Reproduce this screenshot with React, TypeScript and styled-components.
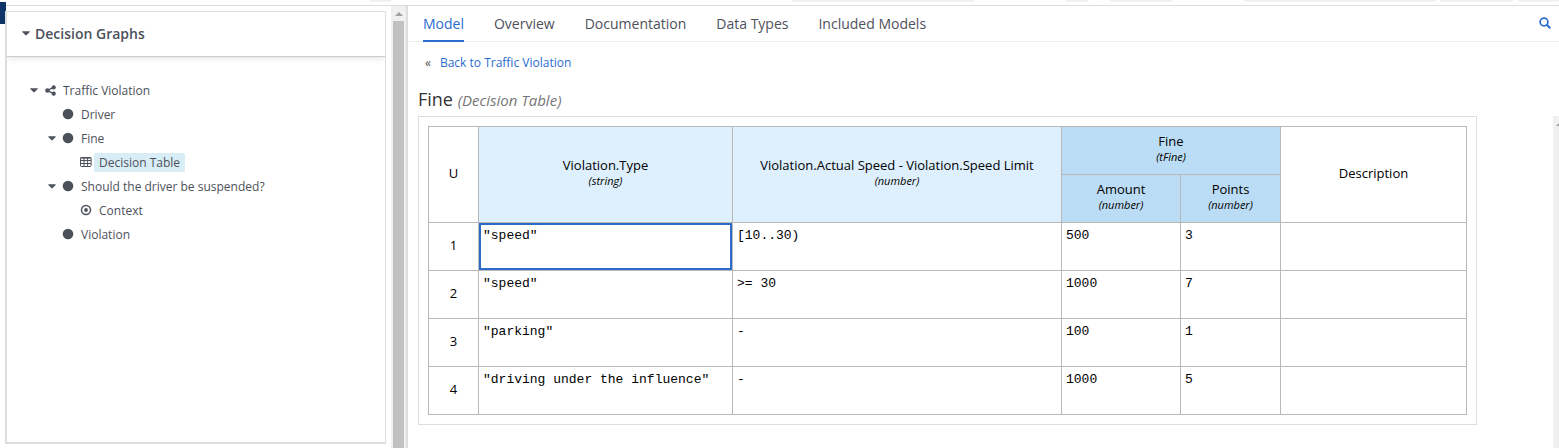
import React, { useState } from "react";
import styled, { createGlobalStyle } from "styled-components";

const Global = createGlobalStyle`
  * { box-sizing: border-box; }
  body { margin: 0; background: #fff; font-family: "Open Sans", "Noto Sans", sans-serif; font-size: 12px; color: #4d515b; }
  button { font: inherit; color: inherit; background: none; border: 0; padding: 0; cursor: pointer; }
  a { color: #2a6dce; text-decoration: none; }
  ul { list-style: none; margin: 0; padding: 0; }
`;

const Page = styled.div`
  min-height: 100vh;
  display: flex;
  flex-direction: column;
`;

const Toolbar = styled.header`
  height: 6px;
  margin-left: 6px;
  border-bottom: 1px solid #ddd;
  display: flex;
  justify-content: flex-end;
  align-items: flex-start;
`;

const ToolbarEdge = styled.span<{ $width: number; $gap: number }>`
  width: ${(p) => p.$width}px;
  height: 2px;
  margin-right: ${(p) => p.$gap}px;
  border-radius: 0 0 2px 2px;
  background: linear-gradient(#ececec, #f8f8f8);
`;

const LeadingEdge = styled(ToolbarEdge)`
  margin-left: 363px;
  margin-right: auto;
`;

const Body = styled.div`
  flex: 1;
  display: flex;
`;

const Rail = styled.div`
  width: 5px;
  display: flex;
  flex-direction: column;
`;

const RailTab = styled.div`
  width: 6px;
  height: 22px;
  margin-top: -4px;
  background: #0f3468;
`;

const Sidebar = styled.aside`
  width: 386px;
  padding: 5px 5px 4px 0;
  display: flex;
`;

const Panel = styled.section`
  flex: 1;
  border: 1px solid #ddd;
  border-left-width: 2px;
  border-bottom-width: 2px;
`;

const PanelHeader = styled.h2`
  margin: 0;
  height: 45px;
  padding: 0 15px 2px;
  display: flex;
  align-items: center;
  gap: 5px;
  font-size: 14px;
  font-weight: 600;
  border-bottom: 1px solid #ccc;
  box-shadow: 0 1px 6px rgba(0, 0, 0, 0.12);
  clip-path: inset(0 0 -8px 0);
`;

const Tree = styled.ul`
  padding: 21px 0 0 22px;
`;

const TreeItem = styled.li<{ $depth: number }>`
  height: 24px;
  padding-left: ${(p) => p.$depth * 18}px;
  display: flex;
  align-items: center;
`;

const Toggle = styled.button`
  width: 10px;
  height: 16px;
  margin-right: 5px;
  display: flex;
  align-items: center;
  justify-content: center;
`;

const ToggleSpace = styled.span`
  width: 15px;
`;

const IconBox = styled.span`
  width: 12px;
  display: flex;
  justify-content: center;
`;

const NodeLabel = styled.button<{ $selected?: boolean }>`
  height: 19px;
  padding: 0 5px;
  margin-left: 2px;
  border-radius: 2px;
  line-height: 19px;
  background: ${(p) => (p.$selected ? "#d9edf6" : "transparent")};
`;

const ScrollTrack = styled.div`
  width: 15px;
  padding: 0 2px;
  background: #f0f0f0;
  display: flex;
  flex-direction: column;
  align-items: center;
`;

const ScrollArrow = styled.span`
  width: 0;
  margin: 6px 0 5px;
  border: 4px solid transparent;
  border-top: 0;
  border-bottom: 4px solid #a0a0a0;
`;

const ScrollThumb = styled.span`
  flex: 1;
  align-self: stretch;
  background: #c1c1c1;
`;

const Main = styled.main`
  flex: 1;
  min-width: 0;
  border-left: 2px solid #ddd;
  display: flex;
  flex-direction: column;
`;

const TabBar = styled.nav`
  height: 36px;
  padding: 0 8px 0 15px;
  border-bottom: 1px solid #ededed;
  display: flex;
  align-items: stretch;
  gap: 30px;
`;

const Tab = styled.button<{ $active: boolean }>`
  height: 36px;
  font-size: 14px;
  color: ${(p) => (p.$active ? "#2a6dce" : "inherit")};
  border-bottom: 2px solid ${(p) => (p.$active ? "#2a6dce" : "transparent")};
`;

const SearchButton = styled.button`
  margin-left: auto;
  padding-bottom: 2px;
  display: flex;
  align-items: center;
`;

const BackRow = styled.div`
  height: 40px;
  padding-left: 17px;
  display: flex;
  align-items: center;
  gap: 9px;
`;

const Title = styled.h1`
  margin: 0;
  height: 34px;
  padding: 5px 0 0 10px;
  font-size: 18px;
  font-weight: 400;
  line-height: 24px;
  color: #333;
`;

const TitleNote = styled.em`
  font-size: 15px;
  color: #777;
`;

const Canvas = styled.div`
  flex: 1;
  padding-left: 10px;
  display: flex;
  align-items: flex-start;
  justify-content: space-between;
`;

const TableFrame = styled.div`
  border: 1px solid #ddd;
  padding: 9px;
`;

const DecisionTable = styled.table`
  table-layout: fixed;
  width: 1039px;
  border-collapse: separate;
  border-spacing: 0;
  border: solid #b8b8b8;
  border-width: 1px 0 0 1px;
  color: #000;
`;

const Col = styled.col<{ $width: number }>`
  width: ${(p) => p.$width}px;
`;

const Head = styled.th<{ $tone?: "input" | "output" }>`
  height: 48px;
  padding: 0 0 3px;
  font-size: 13px;
  font-weight: 400;
  line-height: 16px;
  text-align: center;
  vertical-align: middle;
  border: solid #b8b8b8;
  border-width: 0 1px 1px 0;
  background: ${(p) => (p.$tone === "output" ? "#bbdcf5" : p.$tone === "input" ? "#def0fe" : "#fff")};
`;

const TypeName = styled.em`
  display: block;
  font-size: 11px;
`;

const Cell = styled.td<{ $selected?: boolean }>`
  height: 48px;
  padding: 5px 4px 0;
  font-family: "Liberation Mono", monospace;
  font-size: 13px;
  line-height: 16px;
  vertical-align: top;
  border: solid #b8b8b8;
  border-width: 0 1px 1px 0;
  box-shadow: ${(p) => (p.$selected ? "inset 0 0 0 2px #2b6cc9" : "none")};
`;

const RightTrack = styled.div`
  align-self: stretch;
  width: 6px;
  padding-top: 6px;
  background: #f0f0f0;
  overflow: hidden;
`;

const RightArrow = styled.span`
  display: block;
  width: 0;
  margin-left: 3px;
  border: 4px solid transparent;
  border-top: 0;
  border-bottom: 4px solid #a0a0a0;
`;

const Caret = () => (
  <svg width="8" height="5" viewBox="0 0 8 5" fill="currentColor" aria-hidden="true">
    <path d="M0.6 0.3h6.8q.6 0 .3.6L4.4 4.3q-.4.4-.8 0L.3.9Q0 .3.6.3z" />
  </svg>
);

type IconKind = "share" | "circle" | "table" | "context";

const NodeIcon = ({ kind }: { kind: IconKind }) => {
  if (kind === "share")
    return (
      <svg width="11" height="11" viewBox="0 0 11 11" fill="currentColor" stroke="currentColor" aria-hidden="true">
        <path d="M8.6 2.4 2.4 5.5l6.2 3.1" fill="none" strokeWidth="1.3" />
        <g stroke="none">
          <circle cx="8.7" cy="2.4" r="2.1" />
          <circle cx="2.4" cy="5.5" r="2.2" />
          <circle cx="8.7" cy="8.7" r="2.1" />
        </g>
      </svg>
    );
  if (kind === "circle")
    return (
      <svg width="12" height="12" viewBox="0 0 12 12" fill="currentColor" aria-hidden="true">
        <circle cx="6" cy="6" r="5.3" />
      </svg>
    );
  if (kind === "table")
    return (
      <svg width="12" height="10" viewBox="0 0 12 10" fill="none" stroke="currentColor" aria-hidden="true">
        <rect x=".5" y=".5" width="10.6" height="9" rx=".8" />
        <path d="M.5 1.1h10.6M.5 3.5h10.6M.5 6.5h10.6M4 1v8.5M7.6 1v8.5" />
      </svg>
    );
  return (
    <svg width="12" height="12" viewBox="0 0 12 12" fill="none" stroke="currentColor" aria-hidden="true">
      <circle cx="6" cy="6" r="4.5" strokeWidth="1.5" />
      <circle cx="6" cy="6" r="1.9" fill="currentColor" stroke="none" />
    </svg>
  );
};

const SearchIcon = () => (
  <svg width="12" height="12" viewBox="0 0 12 12" fill="none" stroke="#2a6dce" aria-hidden="true">
    <circle cx="5" cy="5" r="3.9" strokeWidth="1.7" />
    <path d="M8 8l2.8 2.8" strokeWidth="2" strokeLinecap="round" />
  </svg>
);

const nodes: { id: string; label: string; depth: number; icon: IconKind; open?: boolean }[] = [
  { id: "root", label: "Traffic Violation", depth: 0, icon: "share", open: true },
  { id: "driver", label: "Driver", depth: 1, icon: "circle" },
  { id: "fine", label: "Fine", depth: 1, icon: "circle", open: true },
  { id: "table", label: "Decision Table", depth: 2, icon: "table" },
  { id: "suspend", label: "Should the driver be suspended?", depth: 1, icon: "circle", open: true },
  { id: "context", label: "Context", depth: 2, icon: "context" },
  { id: "violation", label: "Violation", depth: 1, icon: "circle" },
];

const tabs = ["Model", "Overview", "Documentation", "Data Types", "Included Models"];

const columns = [50, 254, 329, 119, 100, 186];

const rules = [
  ['"speed"', "[10..30)", "500", "3", ""],
  ['"speed"', ">= 30", "1000", "7", ""],
  ['"parking"', "-", "100", "1", ""],
  ['"driving under the influence"', "-", "1000", "5", ""],
];

const toolbarEdges = [
  [182, 92],
  [23, 21],
  [63, 71],
  [192, 4],
  [73, 5],
  [41, 0],
];

export default function App() {
  const [tab, setTab] = useState("Model");
  const [node, setNode] = useState("table");
  const [cell, setCell] = useState("0-0");

  return (
    <Page>
      <Global />
      <Toolbar>
        <LeadingEdge $width={23} $gap={0} />
        {toolbarEdges.map(([width, gap], i) => (
          <ToolbarEdge key={i} $width={width} $gap={gap} />
        ))}
      </Toolbar>
      <Body>
        <Rail>
          <RailTab />
        </Rail>
        <Sidebar>
          <Panel>
            <PanelHeader>
              <Caret />
              Decision Graphs
            </PanelHeader>
            <Tree>
              {nodes.map((n) => (
                <TreeItem key={n.id} $depth={n.depth}>
                  {n.open ? (
                    <Toggle aria-label={`Collapse ${n.label}`}>
                      <Caret />
                    </Toggle>
                  ) : (
                    <ToggleSpace />
                  )}
                  <IconBox>
                    <NodeIcon kind={n.icon} />
                  </IconBox>
                  <NodeLabel $selected={n.id === node} onClick={() => setNode(n.id)}>
                    {n.label}
                  </NodeLabel>
                </TreeItem>
              ))}
            </Tree>
          </Panel>
        </Sidebar>
        <ScrollTrack>
          <ScrollArrow />
          <ScrollThumb />
        </ScrollTrack>
        <Main>
          <TabBar>
            {tabs.map((t) => (
              <Tab key={t} $active={t === tab} onClick={() => setTab(t)}>
                {t}
              </Tab>
            ))}
            <SearchButton aria-label="Search">
              <SearchIcon />
            </SearchButton>
          </TabBar>
          <BackRow>
            <span>«</span>
            <a href="#graph">Back to Traffic Violation</a>
          </BackRow>
          <Title>
            Fine <TitleNote>(Decision Table)</TitleNote>
          </Title>
          <Canvas>
            <TableFrame>
              <DecisionTable>
                <colgroup>
                  {columns.map((w, i) => (
                    <Col key={i} $width={w} />
                  ))}
                </colgroup>
                <thead>
                  <tr>
                    <Head rowSpan={2}>U</Head>
                    <Head rowSpan={2} $tone="input">
                      Violation.Type<TypeName>(string)</TypeName>
                    </Head>
                    <Head rowSpan={2} $tone="input">
                      Violation.Actual Speed - Violation.Speed Limit<TypeName>(number)</TypeName>
                    </Head>
                    <Head colSpan={2} $tone="output">
                      Fine<TypeName>(tFine)</TypeName>
                    </Head>
                    <Head rowSpan={2}>Description</Head>
                  </tr>
                  <tr>
                    <Head $tone="output">
                      Amount<TypeName>(number)</TypeName>
                    </Head>
                    <Head $tone="output">
                      Points<TypeName>(number)</TypeName>
                    </Head>
                  </tr>
                </thead>
                <tbody>
                  {rules.map((rule, r) => (
                    <tr key={r}>
                      <Head scope="row">{r + 1}</Head>
                      {rule.map((value, c) => (
                        <Cell key={c} $selected={cell === `${r}-${c}`} onClick={() => setCell(`${r}-${c}`)}>
                          {value}
                        </Cell>
                      ))}
                    </tr>
                  ))}
                </tbody>
              </DecisionTable>
            </TableFrame>
            <RightTrack>
              <RightArrow />
            </RightTrack>
          </Canvas>
        </Main>
      </Body>
    </Page>
  );
}
